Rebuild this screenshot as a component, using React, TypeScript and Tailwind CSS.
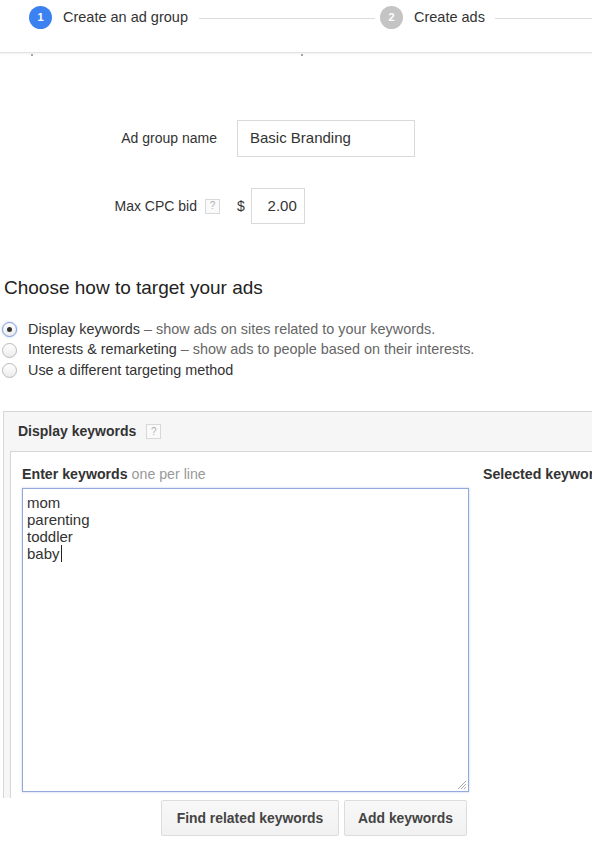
import React from 'react';

const font = { fontFamily: '"Liberation Sans", Arial, sans-serif' };

const HelpBox = ({ className = '' }: { className?: string }) => (
  <span
    className={`inline-flex h-[15px] w-[15px] items-center justify-center border border-[#d8d8d8] bg-[#fafafa] text-[10px] leading-none text-[#b0b0b0] ${className}`}
  >
    ?
  </span>
);

const Radio = ({ checked, label, hint }: { checked?: boolean; label: string; hint?: string }) => (
  <div className="flex h-[20.5px] items-center">
    <span
      className={`flex h-[15px] w-[15px] items-center justify-center rounded-full border bg-gradient-to-b from-white to-[#ececec] ${
        checked ? 'border-[#7a9bd8] shadow-[0_0_2px_#9fbbe8]' : 'border-[#b9b9b9]'
      }`}
    >
      {checked && <span className="h-[5px] w-[5px] rounded-full bg-[#333]" />}
    </span>
    <span className="ml-[11px] text-[14.4px] text-[#333]">
      {label}
      {hint && <span className="text-[#666]"> – {hint}</span>}
    </span>
  </div>
);

const Step = ({ n, label, active }: { n: number; label: string; active?: boolean }) => (
  <div className="flex items-center">
    <span
      className={`flex h-[23px] w-[23px] items-center justify-center rounded-full text-[11px] font-bold text-white ${
        active ? 'bg-[#3b82f0]' : 'bg-[#c4c4c4]'
      }`}
    >
      {n}
    </span>
    <span className="ml-[11px] text-[14.5px] text-[#333]">{label}</span>
  </div>
);

export default function App() {
  return (
    <div className="relative h-[842px] w-[592px] overflow-hidden bg-white" style={font}>
      {/* steps header */}
      <div className="relative flex h-[53px] items-start border-b border-[#e2e2e2] pl-[29px] pt-[6px] shadow-[0_1px_2px_rgba(0,0,0,0.06)]">
        <Step n={1} label="Create an ad group" active />
        <div className="ml-[11px] mt-[12px] h-px w-[176px] bg-[#dcdcdc]" />
        <div className="ml-[5px]">
          <Step n={2} label="Create ads" />
        </div>
        <div className="ml-[10px] mt-[12px] h-px flex-1 bg-[#dcdcdc]" />
        <span className="absolute left-[31px] top-[54px] h-[2px] w-[2px] rounded-full bg-[#888]" />
        <span className="absolute left-[301px] top-[54px] h-[2px] w-[2px] rounded-full bg-[#888]" />
      </div>

      {/* ad group form */}
      <div className="mt-[67px] flex items-center">
        <span className="w-[217px] text-right text-[14px] text-[#333]">Ad group name</span>
        <div className="ml-[20px] flex h-[37px] w-[178px] items-center border border-[#d9d9d9] pl-[12px] text-[15px] text-[#333]">
          Basic Branding
        </div>
      </div>
      <div className="mt-[31px] flex items-center">
        <span className="w-[197px] text-right text-[14px] text-[#333]">Max CPC bid</span>
        <HelpBox className="ml-[8px]" />
        <span className="ml-[17px] text-[14px] text-[#333]">$</span>
        <div className="ml-[6px] flex h-[36px] w-[54px] items-center justify-end border border-[#d9d9d9] pr-[7px] text-[15px] text-[#333]">
          2.00
        </div>
      </div>

      {/* targeting */}
      <h2 className="ml-[4px] mt-[50px] text-[19px] font-normal text-[#222]">Choose how to target your ads</h2>
      <div className="ml-[2px] mt-[17px]">
        <Radio checked label="Display keywords" hint="show ads on sites related to your keywords." />
        <Radio label="Interests & remarketing" hint="show ads to people based on their interests." />
        <Radio label="Use a different targeting method" />
      </div>

      {/* display keywords panel */}
      <div className="ml-[3px] mt-[30px] w-[640px] border-l border-r border-t border-[#d6d6d6] bg-[#f6f6f6] pl-[6px]">
        <div className="flex h-[39px] items-center pl-[8px]">
          <span className="text-[14px] font-bold text-[#333]">Display keywords</span>
          <HelpBox className="ml-[10px]" />
        </div>
        <div className="flex h-[347px] border-l border-t border-[#d6d6d6] bg-white pl-[11px]">
          <div className="w-[449px] pt-[12px]">
            <div className="text-[14.2px] text-[#333]">
              <span className="font-bold">Enter keywords</span>
              <span className="text-[#999]"> one per line</span>
            </div>
            <div className="relative mt-[3px] h-[304px] w-[447px] border border-[#93a8dc] px-[4px] pt-[5px] text-[15px] leading-[17px] text-[#333] shadow-[0_0_2px_rgba(120,150,220,0.5)]">
              <div>mom</div>
              <div>parenting</div>
              <div>toddler</div>
              <div className="flex items-center">
                baby
                <span className="ml-px h-[17px] w-px bg-[#222]" />
              </div>
              <svg className="absolute bottom-[1px] right-[1px]" width="11" height="11" viewBox="0 0 11 11">
                <path d="M10 2 L2 10 M10 5 L5 10 M10 8 L8 10" stroke="#aaa" strokeWidth="1" />
              </svg>
            </div>
          </div>
          <div className="ml-[12px] pt-[12px] text-[14.2px] font-bold text-[#333]">Selected keywords</div>
        </div>
      </div>

      {/* action buttons */}
      <div className="ml-[161px] mt-[2px] flex gap-[5px]">
        <button className="h-[36px] w-[178px] rounded-[2px] border border-[#dcdcdc] bg-gradient-to-b from-[#f8f8f8] to-[#f1f1f1] text-[13.9px] font-bold text-[#444]">
          Find related keywords
        </button>
        <button className="h-[36px] w-[123px] rounded-[2px] border border-[#dcdcdc] bg-gradient-to-b from-[#f8f8f8] to-[#f1f1f1] text-[13.9px] font-bold text-[#444]">
          Add keywords
        </button>
      </div>
    </div>
  );
}
